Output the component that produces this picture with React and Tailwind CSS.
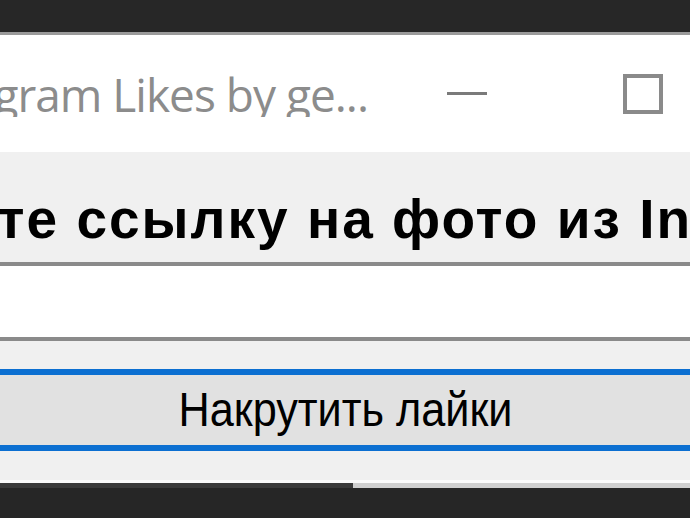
export default function App() {
  return (
    <div className="w-[690px] h-[518px] overflow-hidden bg-[#252525] flex flex-col" style={{ fontFamily: '"Liberation Sans", Arial, sans-serif' }}>
      {/* dark area above the window */}
      <div className="h-[32px] shrink-0 bg-[#272727]" />
      <div className="h-[3px] shrink-0 bg-[#9a9a9a]" />

      {/* title bar */}
      <div className="h-[117px] shrink-0 bg-white flex items-center">
        <div
          className="w-[368px] flex justify-end overflow-hidden whitespace-nowrap text-[46px] tracking-[-1px] text-[#8c8c8c] leading-none"
          style={{ fontFamily: '"Open Sans", "Noto Sans", sans-serif' }}
        >
          Instagram Likes by ge...
        </div>
        <div className="ml-[79px] w-[40px] h-[3px] bg-[#7a7a7a]" />
        <div className="ml-[136px] w-[40px] h-[40px] border-[4px] border-[#8a8a8a]" />
      </div>

      {/* client area */}
      <div className="h-[328px] shrink-0 bg-[#f0f0f0] flex flex-col">
        <div className="h-[110px] shrink-0 overflow-hidden flex items-end pb-[15px]">
          <div className="ml-[-205px] whitespace-nowrap font-bold text-[55px] tracking-[2px] leading-none text-black">
            Вставьте ссылку на фото из Instagram
          </div>
        </div>

        {/* text field */}
        <div className="h-[79px] shrink-0 bg-white border-y-[4px] border-[#8a8a8a]" />

        <div className="h-[28px] shrink-0" />

        {/* button */}
        <div className="h-[82px] shrink-0 bg-[#e1e1e1] border-y-[6px] border-[#0b6fd1] flex items-center justify-center">
          <span className="inline-block text-[48px] leading-none text-black scale-x-90">Накрутить лайки</span>
        </div>
      </div>

      {/* bottom edge */}
      <div className="h-[3px] shrink-0 bg-[#fafafa]" />
      <div className="h-[5px] shrink-0 flex">
        <div className="w-[353px] bg-[#3a3a3a]" />
        <div className="flex-1 bg-[#cfcfcf]" />
      </div>
      <div className="flex-1 bg-[#262626]" />
    </div>
  );
}
